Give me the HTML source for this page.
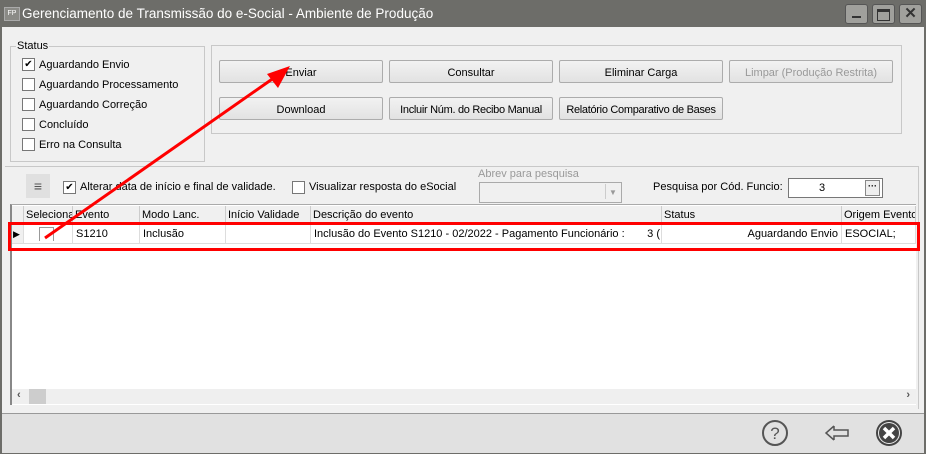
<!DOCTYPE html><html><head><style>
body{margin:0;width:926px;height:454px;overflow:hidden;font-family:"Liberation Sans",Tahoma,sans-serif;font-size:11px;color:#000;position:relative;background:#6d6d69}
.a{position:absolute;white-space:nowrap}
.btn{position:absolute;height:23px;border:1px solid #acacac;border-radius:2px;background:linear-gradient(#f2f2f2,#e2e2e2);text-align:center;line-height:24px;box-sizing:border-box;font-size:11px;white-space:nowrap}
.cb{position:absolute;width:11px;height:11px;border:1px solid #777;background:#fff}
.hd{position:absolute;top:0;height:18px;line-height:19px;border-right:1px solid #ccc;padding-left:2px;box-sizing:border-box;white-space:nowrap;overflow:hidden}
.cl{position:absolute;top:0;height:18px;line-height:19px;border-right:1px solid #ddd;padding-left:3px;box-sizing:border-box;white-space:nowrap;overflow:hidden}
</style></head><body>
<div class="a" style="left:0;top:0;width:926px;height:27px;background:#6d6d69"></div>
<div class="a" style="left:4px;top:7px;width:14px;height:12px;background:#8a8a86;border:1px solid #aaa;color:#fff;font-size:7px;line-height:12px;text-align:center">FP</div>
<div class="a" style="left:22px;top:6px;color:#fff;font-size:13.5px">Gerenciamento de Transmissão do e-Social - Ambiente de Produção</div>
<div class="a" style="left:845px;top:4px;width:21px;height:18px;background:#a0a09c;border-radius:3px;border:1px solid #555"><div class="a" style="left:6px;top:11px;width:9px;height:2px;background:#333"></div></div>
<div class="a" style="left:872px;top:4px;width:21px;height:18px;background:#a0a09c;border-radius:3px;border:1px solid #555"><div class="a" style="left:4px;top:4px;width:11px;height:8px;border:1px solid #333;border-top-width:3px"></div></div>
<div class="a" style="left:899px;top:4px;width:21px;height:18px;background:#a0a09c;border-radius:3px;border:1px solid #555;color:#333;font-weight:bold;font-size:15px;text-align:center;line-height:18px">✕</div>
<div class="a" style="left:2px;top:27px;width:922px;height:386px;background:#f0f0f0"></div>
<div class="a" style="left:2px;top:413px;width:922px;height:39px;background:#e1e1e1;border-top:1px solid #999"></div>
<!-- status group -->
<div class="a" style="left:10px;top:46px;width:193px;height:114px;border:1px solid #c8c8c8"></div>
<div class="a" style="left:16px;top:40px;background:#f0f0f0;padding:0 1px">Status</div>
<div class="cb" style="left:22px;top:58px;font-size:10px;line-height:11px;text-align:center">✔</div><div class="a" style="left:39px;top:59px">Aguardando Envio</div>
<div class="cb" style="left:22px;top:78px"></div><div class="a" style="left:39px;top:79px">Aguardando Processamento</div>
<div class="cb" style="left:22px;top:98px"></div><div class="a" style="left:39px;top:99px">Aguardando Correção</div>
<div class="cb" style="left:22px;top:118px"></div><div class="a" style="left:39px;top:119px">Concluído</div>
<div class="cb" style="left:22px;top:138px"></div><div class="a" style="left:39px;top:139px">Erro na Consulta</div>
<!-- buttons panel -->
<div class="a" style="left:211px;top:45px;width:689px;height:87px;border:1px solid #c8c8c8"></div>
<div class="btn" style="left:219px;top:60px;width:164px">Enviar</div>
<div class="btn" style="left:389px;top:60px;width:164px">Consultar</div>
<div class="btn" style="left:559px;top:60px;width:164px">Eliminar Carga</div>
<div class="btn" style="left:729px;top:60px;width:164px;color:#999">Limpar (Produção Restrita)</div>
<div class="btn" style="left:219px;top:97px;width:164px">Download</div>
<div class="btn" style="left:389px;top:97px;width:164px;letter-spacing:-0.3px">Incluir Núm. do Recibo Manual</div>
<div class="btn" style="left:559px;top:97px;width:164px;letter-spacing:-0.3px">Relatório Comparativo de Bases</div>
<!-- lower panel -->
<div class="a" style="left:5px;top:166px;width:913px;height:242px;border-top:1px solid #c8c8c8;border-right:1px solid #c8c8c8"></div>
<div class="a" style="left:26px;top:174px;width:24px;height:24px;background:#e0e0e0;color:#555;font-size:14px;line-height:24px;text-align:center">≡</div>
<div class="cb" style="left:63px;top:181px;font-size:10px;line-height:11px;text-align:center">✔</div><div class="a" style="left:80px;top:181px">Alterar data de início e final de validade.</div>
<div class="cb" style="left:292px;top:181px"></div><div class="a" style="left:309px;top:181px">Visualizar resposta do eSocial</div>
<div class="a" style="left:478px;top:168px;color:#999">Abrev para pesquisa</div>
<div class="a" style="left:479px;top:182px;width:141px;height:19px;border:1px solid #aaa;background:#f0f0f0"><div class="a" style="right:1px;top:1px;width:14px;height:15px;border-left:1px solid #ccc;color:#999;font-size:8px;text-align:center;line-height:17px">▼</div></div>
<div class="a" style="left:653px;top:181px">Pesquisa por Cód. Funcio:</div>
<div class="a" style="left:788px;top:178px;width:93px;height:18px;border:1px solid #777;background:#fff"><div class="a" style="left:30px;top:3px">3</div><div class="a" style="right:2px;top:1px;width:13px;height:14px;border:1px solid #888;background:#eee;font-size:9px;line-height:10px;text-align:center;font-weight:bold">···</div></div>
<!-- grid -->
<div class="a" style="left:10px;top:204px;width:906px;height:201px;background:#fff;border-left:2px solid #888;border-top:1px solid #aaa;box-sizing:border-box"></div>
<div class="a" style="left:12px;top:206px;width:904px;height:18px;background:#f0f0f0;border-bottom:1px solid #ccc">
<div class="hd" style="left:0;width:12px"></div>
<div class="hd" style="left:12px;width:49px">Seleciona</div>
<div class="hd" style="left:61px;width:67px">Evento</div>
<div class="hd" style="left:128px;width:86px">Modo Lanc.</div>
<div class="hd" style="left:214px;width:85px">Início Validade</div>
<div class="hd" style="left:299px;width:351px">Descrição do evento</div>
<div class="hd" style="left:650px;width:180px">Status</div>
<div class="hd" style="left:830px;width:74px">Origem Evento</div>
</div>
<div class="a" style="left:12px;top:225px;width:904px;height:18px;border-bottom:1px solid #ddd">
<div class="cl" style="left:0;width:12px;background:#f0f0f0;font-size:9px;padding-left:1px">▶</div>
<div class="cl" style="left:12px;width:49px"><div class="a" style="left:15px;top:2px;width:13px;height:13px;border:1px solid #999;border-bottom:0"></div></div>
<div class="cl" style="left:61px;width:67px">S1210</div>
<div class="cl" style="left:128px;width:86px">Inclusão</div>
<div class="cl" style="left:214px;width:85px"></div>
<div class="cl" style="left:299px;width:351px">Inclusão do Evento S1210 - 02/2022 - Pagamento Funcionário :<span class="a" style="right:1px;top:0">3 (</span></div>
<div class="cl" style="left:650px;width:180px;text-align:right;padding-right:3px">Aguardando Envio</div>
<div class="cl" style="left:830px;width:74px">ESOCIAL;</div>
</div>
<div class="a" style="left:12px;top:389px;width:904px;height:15px;background:#efefef"><div class="a" style="left:5px;top:0;color:#555;font-weight:bold;font-size:11px">‹</div><div class="a" style="left:17px;top:0;width:17px;height:15px;background:#cdcdcd"></div><div class="a" style="right:6px;top:0;color:#555;font-weight:bold;font-size:11px">›</div></div>
<div class="a" style="left:8px;top:222px;width:906px;height:23px;border:3px solid #f00"></div>
<!-- arrow -->
<svg class="a" style="left:0;top:0" width="926" height="454"><line x1="45" y1="238" x2="278" y2="75" stroke="#f00" stroke-width="3"/><polygon points="290,66 267,74 278,88" fill="#f00"/></svg>
<!-- bottom icons -->
<svg class="a" style="left:760px;top:418px" width="160" height="32">
<circle cx="15" cy="15" r="12" fill="none" stroke="#555" stroke-width="2"/><text x="15" y="21" text-anchor="middle" font-size="17" fill="#555" font-family="Liberation Sans">?</text>
<path d="M74 8 L66 15 L74 22 M74 8 V12 H88 V18 H74 V22" stroke="#555" stroke-width="1.5" fill="none" stroke-linejoin="miter"/>
<circle cx="129" cy="15" r="13" fill="#444"/><circle cx="129" cy="15" r="11" fill="#eee"/><circle cx="129" cy="15" r="10" fill="#444"/><path d="M124 10 L134 20 M134 10 L124 20" stroke="#fff" stroke-width="3.5"/>
</svg>
</body></html>
